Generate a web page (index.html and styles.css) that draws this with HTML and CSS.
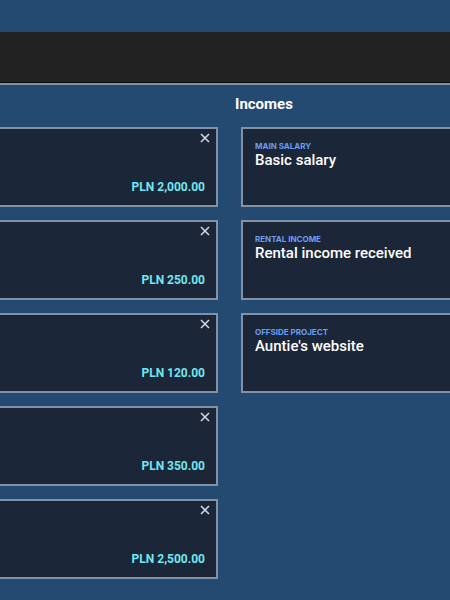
FILE: index.html
```html
<!DOCTYPE html>
<html lang="en">
<head>
    <meta charset="UTF-8">
    <meta name="viewport" content="width=device-width, initial-scale=1.0">
    <title>Budget board</title>
    <link rel="stylesheet" href="styles.css">
</head>
<body>
    <div class="top-band"></div>
    <div class="toolbar"></div>

    <div class="board">
        <h2 class="board-title">Incomes</h2>

        <div class="columns">
            <div class="column">
                <div class="entry">
                    <button class="remove" aria-label="Remove">
                        <svg width="10" height="10" viewBox="0 0 10 10"><path d="M1 1L9 9M9 1L1 9"/></svg>
                    </button>
                    <div class="amount">PLN 2,000.00</div>
                </div>
                <div class="entry">
                    <button class="remove" aria-label="Remove">
                        <svg width="10" height="10" viewBox="0 0 10 10"><path d="M1 1L9 9M9 1L1 9"/></svg>
                    </button>
                    <div class="amount">PLN 250.00</div>
                </div>
                <div class="entry">
                    <button class="remove" aria-label="Remove">
                        <svg width="10" height="10" viewBox="0 0 10 10"><path d="M1 1L9 9M9 1L1 9"/></svg>
                    </button>
                    <div class="amount">PLN 120.00</div>
                </div>
                <div class="entry">
                    <button class="remove" aria-label="Remove">
                        <svg width="10" height="10" viewBox="0 0 10 10"><path d="M1 1L9 9M9 1L1 9"/></svg>
                    </button>
                    <div class="amount">PLN 350.00</div>
                </div>
                <div class="entry">
                    <button class="remove" aria-label="Remove">
                        <svg width="10" height="10" viewBox="0 0 10 10"><path d="M1 1L9 9M9 1L1 9"/></svg>
                    </button>
                    <div class="amount">PLN 2,500.00</div>
                </div>
            </div>

            <div class="column">
                <div class="source">
                    <div class="source-label">Main salary</div>
                    <div class="source-name">Basic salary</div>
                </div>
                <div class="source">
                    <div class="source-label">Rental income</div>
                    <div class="source-name">Rental income received</div>
                </div>
                <div class="source">
                    <div class="source-label">Offside project</div>
                    <div class="source-name">Auntie's website</div>
                </div>
            </div>
        </div>
    </div>
</body>
</html>
```

FILE: styles.css
```css
:root {
    --board-bg: #244a72;
    --card-bg: #1b2639;
    --card-border: #8192a8;
    --amount-color: #72e6ef;
    --label-color: #6c9df0;
}

body {
    margin: 0;
    background-color: var(--board-bg);
    font-family: Roboto, 'Liberation Sans', sans-serif;
    color: #fff;
    overflow: hidden;
    height: 600px;
}

.top-band {
    height: 32px;
}

.toolbar {
    height: 50px;
    background-color: #222;
    border-bottom: 1px solid #0c0c0c;
}

.board {
    border-top: 2px solid var(--card-border);
    overflow: hidden;
}

.board-title {
    margin: 0 0 13px;
    padding: 9px 0 0 235px;
    font-size: 15px;
    line-height: 20px;
    font-weight: 700;
}

.columns {
    display: grid;
    grid-template-columns: 260px 260px;
    column-gap: 23px;
    margin-left: -42px;
}

.column {
    display: flex;
    flex-direction: column;
    gap: 13px;
}

.entry,
.source {
    box-sizing: border-box;
    height: 80px;
    background-color: var(--card-bg);
    border: 2px solid var(--card-border);
}

.entry {
    display: flex;
    flex-direction: column;
    align-items: flex-end;
    justify-content: space-between;
    padding: 4px 11px 10px 12px;
}

.remove {
    padding: 0;
    margin-right: -5px;
    background: none;
    border: none;
    cursor: pointer;
    line-height: 0;
}

.remove svg path {
    stroke: #d8dce2;
    stroke-width: 1.5;
}

.amount {
    color: var(--amount-color);
    font-size: 12px;
    font-weight: 700;
    line-height: 15px;
}

.source {
    padding: 12px 12px;
}

.source-label {
    color: var(--label-color);
    font-family: Inter, Roboto, sans-serif;
    font-size: 8px;
    font-weight: 700;
    text-transform: uppercase;
    line-height: 10px;
}

.source-name {
    font-size: 15px;
    font-weight: 500;
    line-height: 18px;
}
```
